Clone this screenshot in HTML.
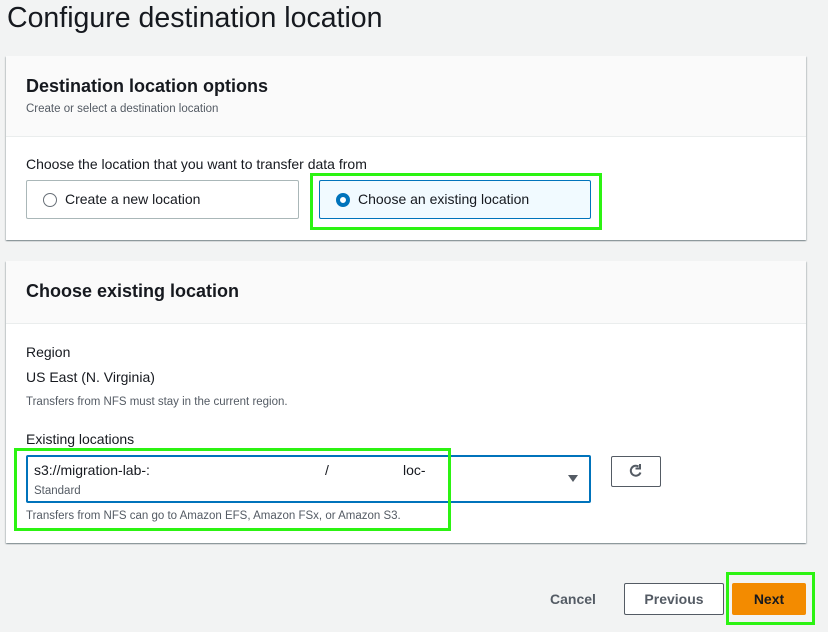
<!DOCTYPE html>
<html><head><style>
*{box-sizing:border-box;margin:0;padding:0}
body{width:828px;height:632px;background:#f2f3f3;font-family:"Liberation Sans",Arial,sans-serif;color:#16191f;position:relative;overflow:hidden}
.a{position:absolute;white-space:nowrap}
.panel{position:absolute;left:6px;width:800px;background:#fff;box-shadow:0 1px 1px rgba(0,28,36,.3),1px 1px 1px rgba(0,28,36,.15),-1px 1px 1px rgba(0,28,36,.15)}
.hdr{background:#fafafa;border-bottom:1px solid #eaeded}
.green{position:absolute;border:3px solid #2cf312}
</style></head><body>
<div class="a" style="left:7px;top:2px;font-size:28.5px;color:#16191f">Configure destination location</div>

<div class="panel" style="top:56px;height:184px">
  <div class="hdr" style="height:81px"></div>
</div>
<div class="a" style="left:26px;top:76px;font-size:18px;font-weight:bold">Destination location options</div>
<div class="a" style="left:26px;top:103px;font-size:11.5px;color:#545b64">Create or select a destination location</div>
<div class="a" style="left:26px;top:156px;font-size:14px">Choose the location that you want to transfer data from</div>
<div class="a" style="left:26px;top:180px;width:273px;height:39px;border:1px solid #aab7b8;border-radius:2px"></div>
<div class="a" style="left:43px;top:193px;width:14px;height:14px;border:1.5px solid #687078;border-radius:50%"></div>
<div class="a" style="left:65px;top:191px;font-size:14px">Create a new location</div>
<div class="a" style="left:319px;top:180px;width:272px;height:39px;border:1px solid #0073bb;background:#f1faff;border-radius:2px"></div>
<div class="a" style="left:336px;top:193px;width:14px;height:14px;border:4px solid #0073bb;border-radius:50%;background:#fff"></div>
<div class="a" style="left:358px;top:191px;font-size:14px">Choose an existing location</div>
<div class="green" style="left:310px;top:173px;width:292px;height:57px"></div>

<div class="panel" style="top:261px;height:282px">
  <div class="hdr" style="height:63px"></div>
</div>
<div class="a" style="left:26px;top:281px;font-size:18px;font-weight:bold">Choose existing location</div>
<div class="a" style="left:26px;top:344px;font-size:14px">Region</div>
<div class="a" style="left:26px;top:369px;font-size:14px">US East (N. Virginia)</div>
<div class="a" style="left:26px;top:396px;font-size:11.5px;color:#545b64">Transfers from NFS must stay in the current region.</div>
<div class="a" style="left:26px;top:431px;font-size:14px">Existing locations</div>
<div class="a" style="left:26px;top:455px;width:565px;height:48px;border:2px solid #0073bb;border-radius:2px"></div>
<div class="a" style="left:34px;top:462px;font-size:14px">s3://migration-lab-:</div>
<div class="a" style="left:325px;top:462px;font-size:14px">/</div>
<div class="a" style="left:403px;top:462px;font-size:14px">loc-</div>
<div class="a" style="left:34px;top:485px;font-size:11.5px;color:#545b64">Standard</div>
<div class="a" style="left:568px;top:475px;width:0;height:0;border-left:5px solid transparent;border-right:5px solid transparent;border-top:7px solid #545b64"></div>
<div class="a" style="left:611px;top:456px;width:50px;height:31px;border:1px solid #545b64;border-radius:2px"></div>
<svg class="a" style="left:627px;top:462px" width="18" height="18" viewBox="0 0 18 18"><path d="M13.5 10.5A5 5 0 1 1 11.5 4.5" fill="none" stroke="#545b64" stroke-width="2"/><path d="M13 2v4.5h-4.5" fill="none" stroke="#545b64" stroke-width="2"/></svg>
<div class="a" style="left:26px;top:510px;font-size:11.5px;color:#545b64">Transfers from NFS can go to Amazon EFS, Amazon FSx, or Amazon S3.</div>
<div class="green" style="left:14px;top:448px;width:437px;height:83px"></div>

<div class="a" style="left:550px;top:591px;font-size:14px;font-weight:bold;color:#545b64">Cancel</div>
<div class="a" style="left:624px;top:583px;width:100px;height:32px;border:1px solid #545b64;border-radius:2px;background:#fff;text-align:center;line-height:30px;font-size:14px;font-weight:bold;color:#545b64">Previous</div>
<div class="a" style="left:732px;top:583px;width:74px;height:32px;background:#f38b00;border-radius:2px;text-align:center;line-height:32px;font-size:14px;font-weight:bold;color:#16191f">Next</div>
<div class="green" style="left:726px;top:572px;width:89px;height:53px"></div>
</body></html>
